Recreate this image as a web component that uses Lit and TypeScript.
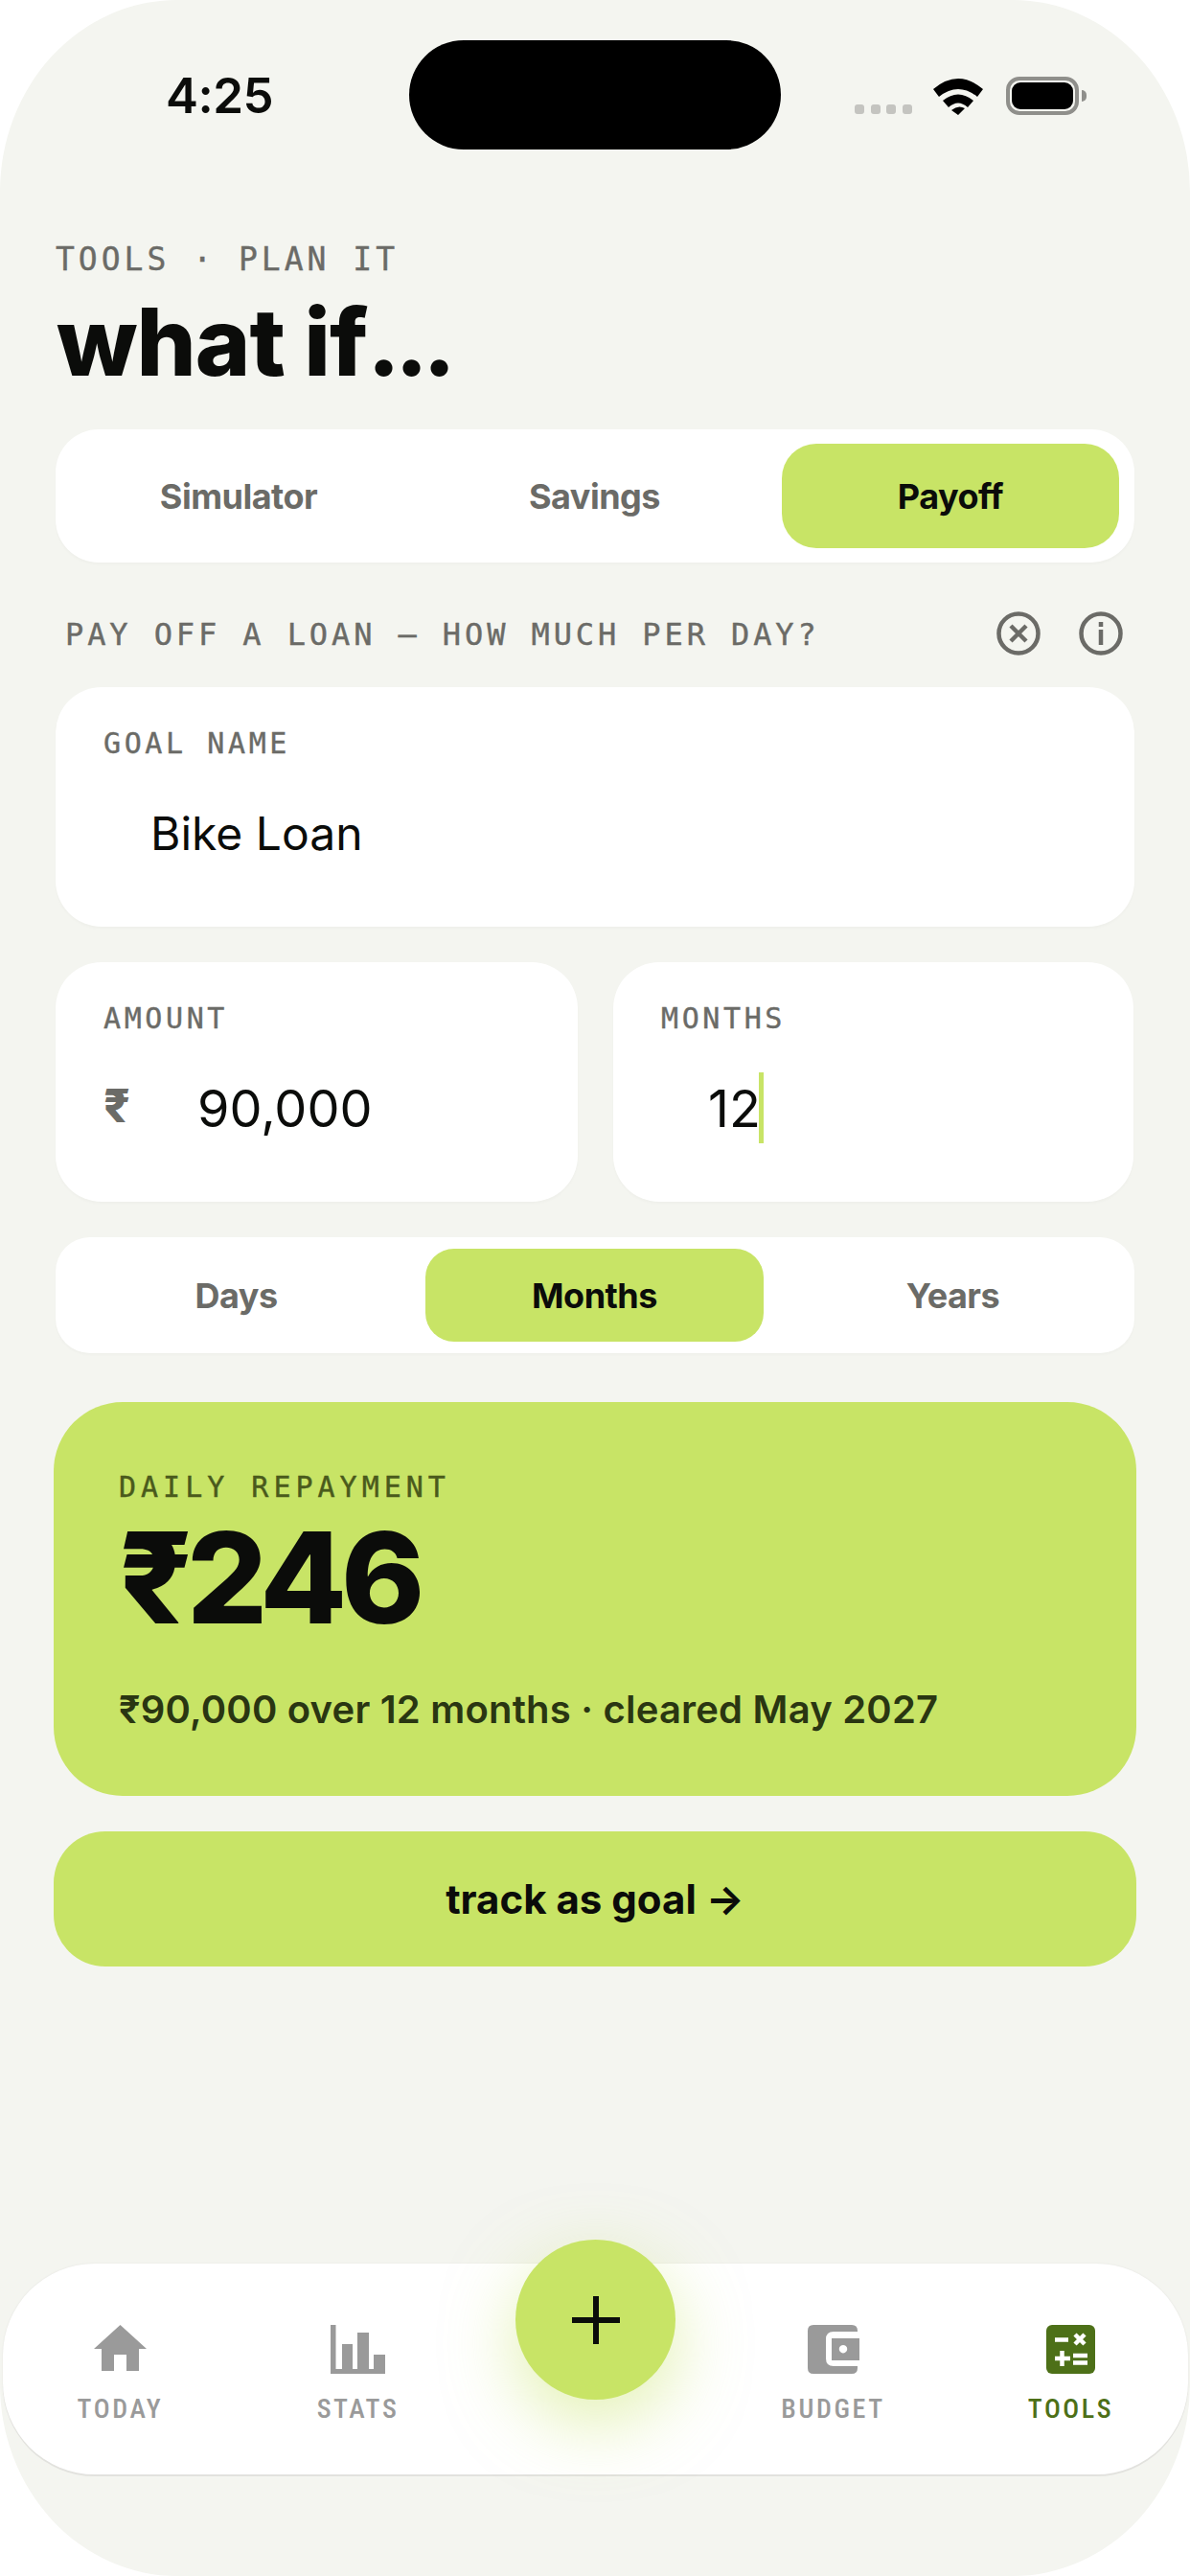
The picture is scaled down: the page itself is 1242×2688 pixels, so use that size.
import { LitElement, html, css, svg } from "lit";
import { customElement } from "lit/decorators.js";

const homeIcon = svg`<path d="M27.5 0 55 25H47V48H34V31H21V48H8V25H0Z" fill="currentColor"/>`;
const statsIcon = svg`<path d="M0 0H5.5V46H12V20H23V46H28V8H40V46H45V31H57V51H0Z" fill="currentColor"/>`;
const walletIcon = svg`<path fill-rule="evenodd" d="M6 0H46Q52 0 52 6V7H27Q19 7 19 15V35Q19 43 27 43H52V45Q52 51 46 51H6Q0 51 0 45V6Q0 0 6 0Z" fill="currentColor"/><path fill-rule="evenodd" d="M25 14H54V37H25ZM37 21a4.200 4.200 0 1 0 .01 0Z" fill="currentColor"/>`;
const toolsIcon = svg`<rect width="51" height="51" rx="6" fill="currentColor"/>
  <g stroke="#fff" stroke-width="4.500" fill="none"><path d="M9 15.500H23M30 10 40 20M40 10 30 20M9 35H25M16.500 27V43M28 32H43M28 39.500H43"/></g>`;

const NAV = [
  { label: "TODAY", icon: homeIcon, w: 55, h: 48, vb: "0 0 55 48" },
  { label: "STATS", icon: statsIcon, w: 57, h: 51, vb: "0 0 57 51" },
  null,
  { label: "BUDGET", icon: walletIcon, w: 54, h: 51, vb: "0 0 54 51" },
  { label: "TOOLS", icon: toolsIcon, w: 51, h: 51, vb: "0 0 51 51", active: true },
];

@customElement("app-root")
export class AppRoot extends LitElement {
  static styles = css`
    :host { display: block; width: 1242px; height: 2688px; background: #fff; font-family: Inter, "Noto Sans", sans-serif; color: #0b0c0a; }
    * { box-sizing: border-box; }
    .frame { position: relative; width: 1242px; height: 2688px; border-radius: 185px / 200px; background: #f4f5f0; display: flex; flex-direction: column; overflow: hidden; }
    .status { height: 244px; padding: 72px 106px 0 173px; display: flex; justify-content: space-between; align-items: flex-start; flex: none; }
    .time { font-size: 51px; line-height: 56px; font-weight: 600; letter-spacing: -0.5px; }
    .island { position: absolute; left: 427px; top: 42px; width: 388px; height: 114px; border-radius: 57px; background: #000; }
    .sys { display: flex; align-items: flex-start; padding-top: 8px; width: 244px; }
    .dots { display: flex; gap: 6.500px; margin: 29px 22px 0 0; }
    .dots i { width: 10px; height: 10px; border-radius: 3px; background: #c4c4c0; }
    .battery { margin-left: 24px; width: 76px; height: 40px; border: 4px solid #8f8f8b; border-radius: 14px; padding: 2px; position: relative; }
    .battery::before { content: ""; display: block; height: 100%; background: #000; border-radius: 9px; }
    .battery::after { content: ""; position: absolute; right: -12px; top: 10px; width: 5px; height: 12px; border-radius: 0 6px 6px 0; background: #8f8f8b; }
    .content { padding: 0 58px; display: flex; flex-direction: column; }
    .mono { font-family: "DejaVu Sans Mono", "Liberation Mono", monospace; color: #6b6b67; -webkit-text-stroke: 0.4px currentColor; }
    .eyebrow { font-size: 33px; line-height: 50px; letter-spacing: 4px; position: relative; top: 2px; }
    .title { margin: 8px 0 36px; font-size: 98px; line-height: 110px; font-weight: 800; letter-spacing: -1px; padding-left: 1px; }
    .title span { letter-spacing: -5.500px; }
    .seg { display: grid; background: #fff; box-shadow: 0 2px 3px rgba(0,0,0,.025); }
    .seg > div { display: flex; align-items: center; justify-content: center; font-weight: 700; font-size: 36px; color: #6b6b67; letter-spacing: -0.500px; }
    .seg > .on { background: #c8e466; color: #0b0c0a; }
    .seg.big { height: 139px; border-radius: 45px; padding: 15px; grid-template-columns: repeat(3, 352px); column-gap: 19.500px; }
    .seg.big > div { border-radius: 36px; }
    .seg.small { height: 121px; border-radius: 36px; padding: 12px; margin-top: 37px; grid-template-columns: repeat(3, 353px); column-gap: 21px; }
    .seg.small > div { border-radius: 30px; }
    .hint { display: flex; align-items: center; justify-content: space-between; height: 46px; margin: 51px 0 33px; padding: 0 12px 0 10px; }
    .hint .mono { font-size: 32px; letter-spacing: 3.900px; line-height: 46px; position: relative; top: 1px; }
    .hint-icons { display: flex; gap: 40px; color: #6b6b67; }
    .hint-icons svg { display: block; }
    .card { background: #fff; border-radius: 48px; padding: 39px 50px 0; box-shadow: 0 2px 3px rgba(0,0,0,.025); height: 250px; }
    .label { font-size: 30px; line-height: 40px; letter-spacing: 3.600px; }
    .value { display: flex; align-items: center; height: 74px; margin-top: 36px; padding-left: 49px; font-size: 54px; position: relative; }
    .value.name { font-size: 48px; }
    .value.money { padding-left: 98px; }
    .rupee { position: absolute; left: 0; top: 11px; font-size: 48px; font-weight: 800; color: #6b6b67; line-height: 48px; }
    .caret { width: 5px; height: 74px; background: #c8e466; margin-left: -2px; }
    .pair { display: grid; grid-template-columns: 545px 543px; gap: 37px; margin-top: 37px; }
    .result { margin: 51px -2px 0; height: 411px; border-radius: 72px; background: #c8e466; padding: 69px 68px 0; }
    .result .label { color: #4a5a1c; font-size: 30px; line-height: 40px; letter-spacing: 5px; }
    .amount { font-size: 132px; font-weight: 800; line-height: 130px; margin-top: 9px; letter-spacing: -6px; }
    .sub { margin-top: 48px; font-size: 40px; line-height: 50px; font-weight: 600; color: #2a3612; letter-spacing: 0.200px; }
    .cta { margin: 37px -2px 0; height: 141px; border-radius: 54px; background: #c8e466; display: flex; align-items: center; justify-content: center; font-size: 42px; font-weight: 700; }
    .nav { position: absolute; left: 3px; top: 2362px; width: 1237px; height: 220px; border-radius: 96px; background: #fff; box-shadow: 0 2px 0 #e2e2de, 0 0 2px #e2e2de; display: grid; grid-template-columns: repeat(5, 248px); justify-content: center; padding-top: 64px; }
    .item { display: flex; flex-direction: column; align-items: center; color: #9a9a9a; }
    .item .ic { height: 51px; display: flex; align-items: flex-start; }
    .item svg { display: block; }
    .item span { margin-top: 21px; font-family: Roboto, sans-serif; font-weight: 500; font-stretch: 85%; font-size: 28px; line-height: 32px; letter-spacing: 2.600px; }
    .item.active { color: #4d7018; }
    .fab { position: absolute; left: 538px; top: 2337px; width: 167px; height: 167px; border-radius: 50%; background: #c8e466; box-shadow: 0 24px 72px rgba(200,228,102,.5); display: flex; align-items: center; justify-content: center; }
  `;

  render() {
    return html`<div class="frame">
      <div class="status">
        <div class="time">4:25</div>
        <div class="sys">
          <div class="dots"><i></i><i></i><i></i><i></i></div>
          <svg width="52" height="40" viewBox="0 0 52 40"><path d="M0 13Q26-9 52 13L46 21Q26 5 6 21Z M10 25Q26 12 42 25L36 32Q26 23 16 32Z M19 35Q26 29 33 33L26 40Z" fill="#000"/></svg>
          <div class="battery"></div>
        </div>
      </div>
      <div class="island"></div>
      <div class="content">
        <div class="mono eyebrow">TOOLS · PLAN IT</div>
        <div class="title">what if<span>...</span></div>
        <div class="seg big">
          <div>Simulator</div><div>Savings</div><div class="on">Payoff</div>
        </div>
        <div class="hint">
          <div class="mono">PAY OFF A LOAN — HOW MUCH PER DAY?</div>
          <div class="hint-icons">
            <svg width="46" height="46" viewBox="0 0 46 46" fill="none" stroke="currentColor" stroke-width="4.500"><circle cx="23" cy="23" r="20.500"/><path d="M15 15 31 31M31 15 15 31"/></svg>
            <svg width="46" height="46" viewBox="0 0 46 46" fill="none" stroke="currentColor" stroke-width="4.500"><circle cx="23" cy="23" r="20.500"/><path d="M23 19V35M23 11V16"/></svg>
          </div>
        </div>
        <div class="card">
          <div class="mono label">GOAL NAME</div>
          <div class="value name">Bike Loan</div>
        </div>
        <div class="pair">
          <div class="card">
            <div class="mono label">AMOUNT</div>
            <div class="value money"><span class="rupee">₹</span>90,000</div>
          </div>
          <div class="card">
            <div class="mono label">MONTHS</div>
            <div class="value">12<span class="caret"></span></div>
          </div>
        </div>
        <div class="seg small">
          <div>Days</div><div class="on">Months</div><div>Years</div>
        </div>
        <div class="result">
          <div class="mono label">DAILY REPAYMENT</div>
          <div class="amount">₹246</div>
          <div class="sub">₹90,000 over 12 months · cleared May 2027</div>
        </div>
        <div class="cta">track as goal →</div>
      </div>
      <div class="nav">
        ${NAV.map((n) =>
          n
            ? html`<div class="item ${n.active ? "active" : ""}">
                <div class="ic"><svg width=${n.w} height=${n.h} viewBox=${n.vb}>${n.icon}</svg></div>
                <span>${n.label}</span>
              </div>`
            : html`<div></div>`
        )}
      </div>
      <div class="fab">
        <svg width="54" height="54" viewBox="0 0 54 54"><path d="M27 2V52M2 27H52" stroke="#0b0c0a" stroke-width="6" fill="none"/></svg>
      </div>
    </div>`;
  }
}
